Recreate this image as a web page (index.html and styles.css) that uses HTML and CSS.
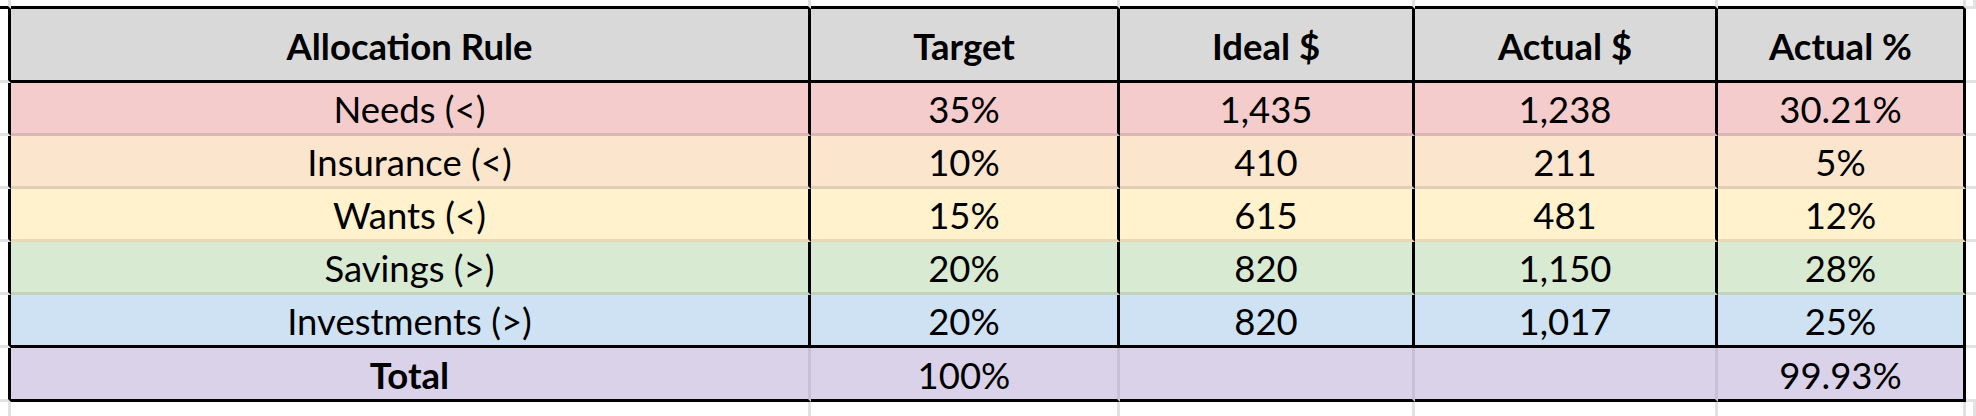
FILE: index.html
```html
<!DOCTYPE html>
<html>
<head>
<meta charset="utf-8">
<link rel="stylesheet" href="styles.css">
</head>
<body>
<div class="sheet">
  <div class="c stub-top stub-corner"></div>
  <div class="c stub-top edge-b"></div>
  <div class="c stub-top edge-b"></div>
  <div class="c stub-top edge-b"></div>
  <div class="c stub-top edge-b"></div>
  <div class="c stub-top edge-b"></div>
  <div class="c stub-top"></div>

  <div class="c stub-left"></div>
  <div class="c hd">Allocation Rule</div>
  <div class="c hd">Target</div>
  <div class="c hd">Ideal $</div>
  <div class="c hd">Actual $</div>
  <div class="c hd">Actual %</div>
  <div class="c stub-right"></div>

  <div class="c stub-left"></div>
  <div class="c row needs">Needs (&lt;)</div>
  <div class="c row needs">35%</div>
  <div class="c row needs">1,435</div>
  <div class="c row needs">1,238</div>
  <div class="c row needs">30.21%</div>
  <div class="c stub-right"></div>

  <div class="c stub-left"></div>
  <div class="c row insurance">Insurance (&lt;)</div>
  <div class="c row insurance">10%</div>
  <div class="c row insurance">410</div>
  <div class="c row insurance">211</div>
  <div class="c row insurance">5%</div>
  <div class="c stub-right"></div>

  <div class="c stub-left"></div>
  <div class="c row wants">Wants (&lt;)</div>
  <div class="c row wants">15%</div>
  <div class="c row wants">615</div>
  <div class="c row wants">481</div>
  <div class="c row wants">12%</div>
  <div class="c stub-right"></div>

  <div class="c stub-left"></div>
  <div class="c row savings">Savings (&gt;)</div>
  <div class="c row savings">20%</div>
  <div class="c row savings">820</div>
  <div class="c row savings">1,150</div>
  <div class="c row savings">28%</div>
  <div class="c stub-right"></div>

  <div class="c stub-left"></div>
  <div class="c row invest last">Investments (&gt;)</div>
  <div class="c row invest last">20%</div>
  <div class="c row invest last">820</div>
  <div class="c row invest last">1,017</div>
  <div class="c row invest last">25%</div>
  <div class="c stub-right"></div>

  <div class="c stub-left"></div>
  <div class="c total bold">Total</div>
  <div class="c total">100%</div>
  <div class="c total"></div>
  <div class="c total"></div>
  <div class="c total end">99.93%</div>
  <div class="c stub-right"></div>

  <div class="c stub-bottom"></div>
  <div class="c stub-bottom"></div>
  <div class="c stub-bottom"></div>
  <div class="c stub-bottom"></div>
  <div class="c stub-bottom"></div>
  <div class="c stub-bottom"></div>
  <div class="c stub-bottom"></div>
</div>
</body>
</html>
```

FILE: styles.css
```css
html, body {
  margin: 0;
  padding: 0;
  background: #ffffff;
}

.sheet {
  width: 1976px;
  height: 416px;
  display: grid;
  grid-template-columns: 11px 800px 309px 295px 303px 248px 1fr;
  grid-template-rows: 9px 74px 53px 53px 53px 53px 53px 54px 1fr;
  font-family: Lato, "Open Sans", sans-serif;
  font-size: 36.5px;
  color: #000;
}

.c {
  box-sizing: border-box;
  border-right: 3px solid #e2e2e2;
  border-bottom: 3px solid #e2e2e2;
  display: flex;
  align-items: center;
  justify-content: center;
  white-space: nowrap;
  overflow: hidden;
}

.stub-top.edge-b,
.stub-top.stub-corner {
  border-bottom-color: #000;
}

.stub-left {
  border-right-color: #000;
}

.stub-bottom {
  border-bottom: none;
}

.stub-right {
  border-right: none;
}

.stub-top:last-child {
  border-right: none;
}

.hd {
  background: #d9d9d9;
  font-weight: 700;
  border-right-color: #000;
  border-bottom-color: #000;
  padding-top: 3px;
}

.row {
  border-right-color: #000;
  border-bottom-color: rgba(0, 0, 0, 0.1);
  padding-top: 2px;
}

.row.last {
  border-bottom-color: #000;
}

.needs { background: #f4cccc; }
.insurance { background: #fce5cd; }
.wants { background: #fff2cc; }
.savings { background: #d9ead3; }
.invest { background: #cfe2f3; }

.total {
  background: #d9d2e9;
  border-right-color: rgba(0, 0, 0, 0.08);
  border-bottom-color: #000;
  padding-top: 2px;
}

.total.end {
  border-right-color: #000;
}

.bold {
  font-weight: 700;
}
```
